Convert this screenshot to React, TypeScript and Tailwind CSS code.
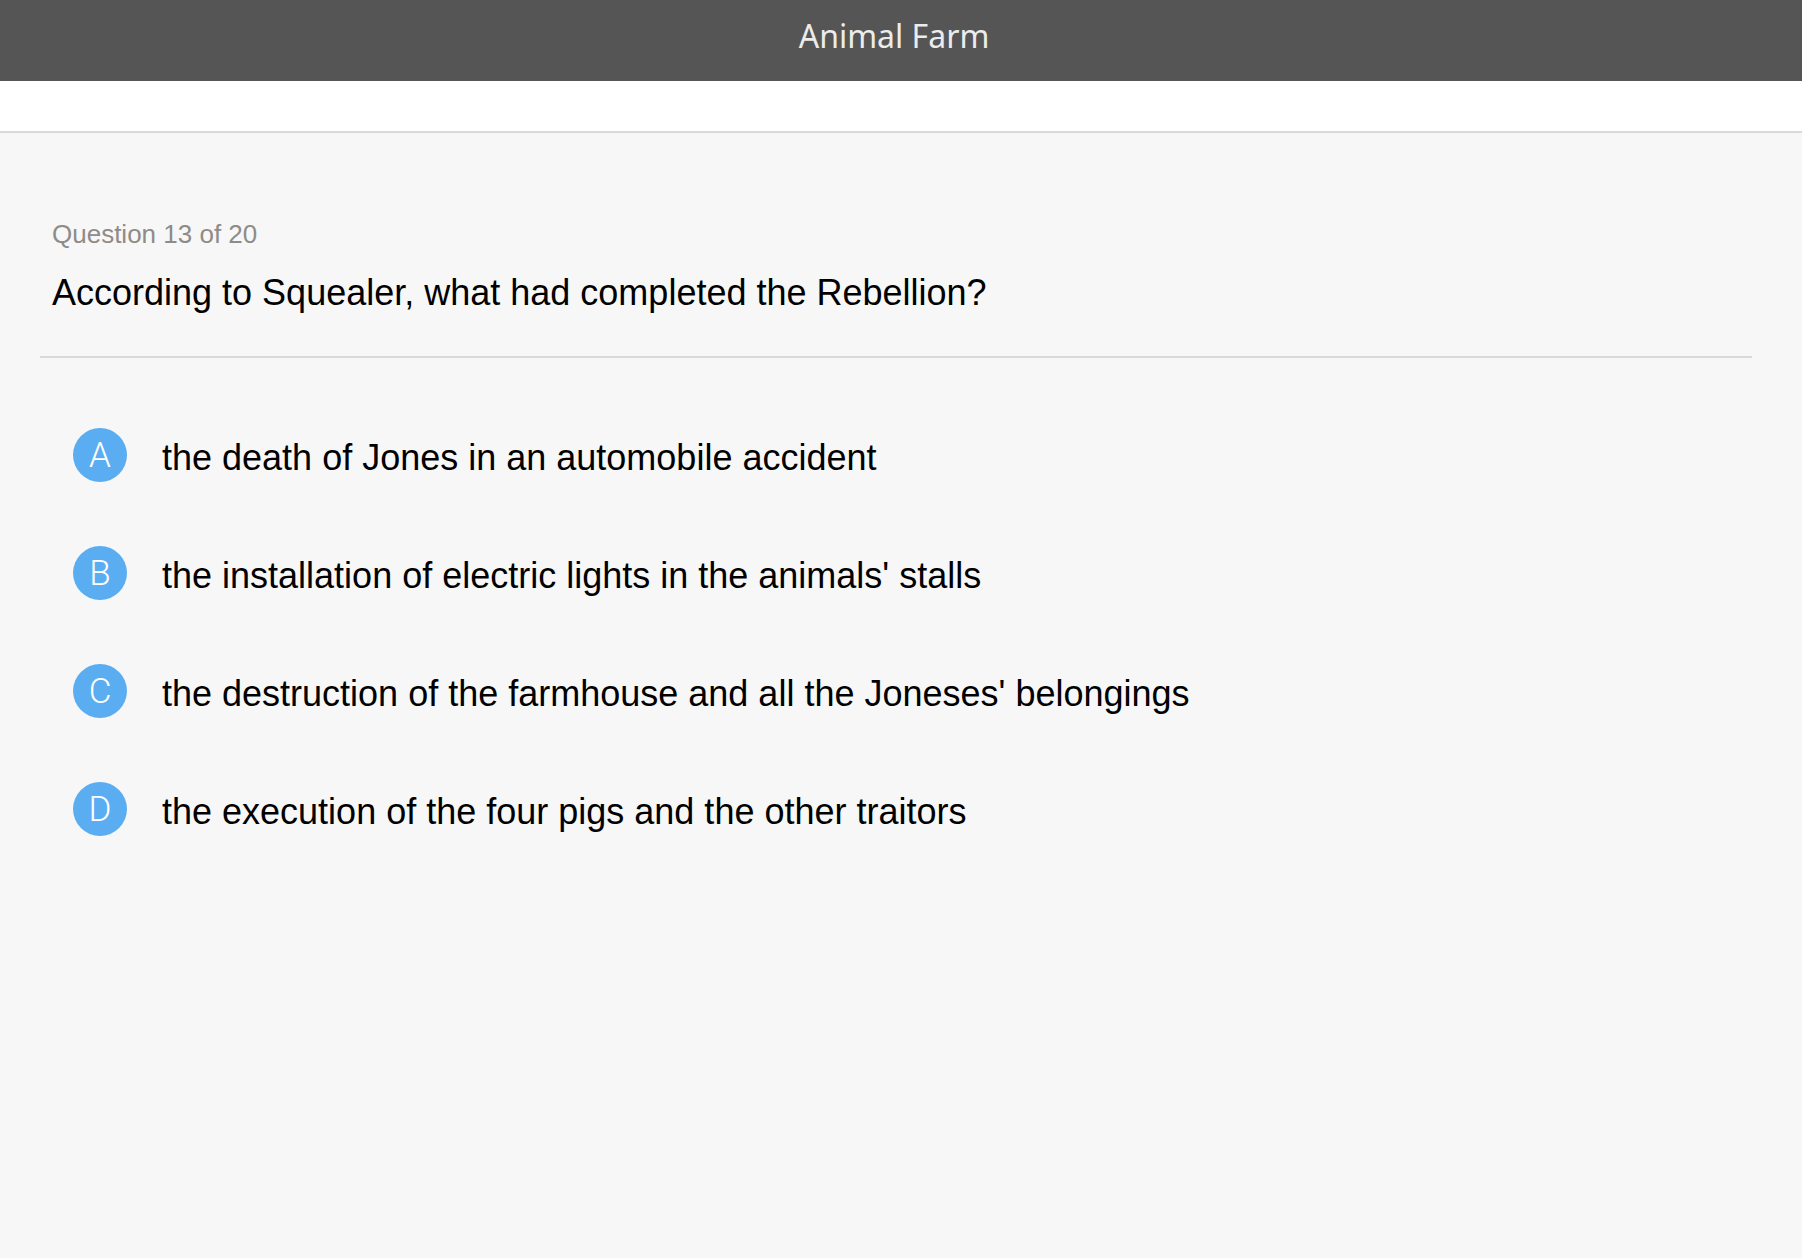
const options = [
  { key: 'A', text: 'the death of Jones in an automobile accident' },
  { key: 'B', text: "the installation of electric lights in the animals' stalls" },
  { key: 'C', text: "the destruction of the farmhouse and all the Joneses' belongings" },
  { key: 'D', text: 'the execution of the four pigs and the other traitors' },
];

export default function App() {
  return (
    <div className="min-h-[1258px] bg-[#f7f7f7] font-['Liberation_Sans',Arial,sans-serif]">
      <header className="h-[81px] bg-[#555555] flex items-center justify-center">
        <h1 className="text-[32px] text-[#ececec] font-['Noto_Sans',sans-serif] leading-none pb-[9px] pr-[14px]">
          Animal Farm
        </h1>
      </header>
      <div className="h-[52px] bg-white border-b-2 border-[#d9d9d9]" />

      <main className="pt-[86px]">
        <div className="pl-[52px]">
          <p className="text-[26px] leading-[31px] text-[#8f8b87]">Question 13 of 20</p>
          <h2 className="mt-[21px] text-[36px] leading-[43px] text-black">
            According to Squealer, what had completed the Rebellion?
          </h2>
        </div>
        <div className="mt-[42px] ml-[40px] mr-[50px] h-[2px] bg-[#d8d8d8]" />

        <ul className="mt-[70px] pl-[73px] flex flex-col gap-[64px]">
          {options.map((o) => (
            <li key={o.key} className="flex items-center h-[54px]">
              <span className="w-[54px] h-[54px] rounded-full bg-[#5aadf1] text-white flex items-center justify-center text-[35px] font-light font-['Roboto',sans-serif] leading-none">
                {o.key}
              </span>
              <span className="ml-[35px] text-[36px] leading-[43px] text-black pt-[5px]">{o.text}</span>
            </li>
          ))}
        </ul>
      </main>
    </div>
  );
}
